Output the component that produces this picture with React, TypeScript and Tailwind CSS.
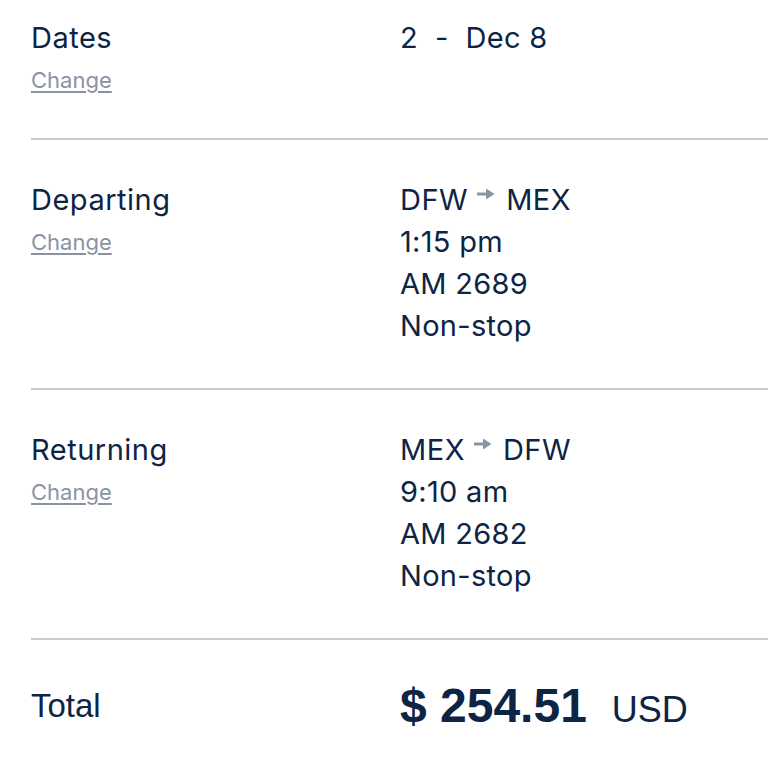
const sections = [
  {
    label: "Dates",
    lines: ["2  -  Dec 8"],
  },
  {
    label: "Departing",
    route: ["DFW", "MEX"],
    lines: ["1:15 pm", "AM 2689", "Non-stop"],
  },
  {
    label: "Returning",
    route: ["MEX", "DFW"],
    lines: ["9:10 am", "AM 2682", "Non-stop"],
  },
]

function Arrow() {
  return (
    <svg width="18" height="12" viewBox="0 0 18 12" className="ml-[9px] mr-[11px] mb-[13px] inline-block" fill="none">
      <path d="M0 6h11" stroke="#8a93a5" strokeWidth="3" />
      <path d="M9 0.5 17.5 6 9 11.5z" fill="#8a93a5" />
    </svg>
  )
}

export default function App() {
  return (
    <div className="min-h-screen bg-white pl-[31px] pr-[12px] text-[#0e2444]" style={{ fontFamily: "Inter, 'Noto Sans', sans-serif" }}>
      {sections.map((s, i) => (
        <div
          key={s.label}
          className={
            i === 0
              ? "flex border-b-2 border-[#c6cad1] pt-[17px] pb-[37px]"
              : "flex border-b-2 border-[#c6cad1] pt-[39px] pb-[41px]"
          }
        >
          <div className="w-[369px] shrink-0">
            <div className="text-[29px] leading-[42px] tracking-[0.5px]">{s.label}</div>
            <div className="text-[22px] leading-[42px] text-[#8a93a5] underline underline-offset-[3px] decoration-[1.5px]">Change</div>
          </div>
          <div className="text-[29px] leading-[42px] tracking-[0.5px]">
            {s.route && (
              <div className="flex items-center">
                {s.route[0]}
                <Arrow />
                {s.route[1]}
              </div>
            )}
            {s.lines.map((l) => (
              <div key={l} className="whitespace-pre tracking-[0.3px]">{l}</div>
            ))}
          </div>
        </div>
      ))}

      {/* Total */}
      <div className="flex items-center pt-[38px]" style={{ fontFamily: "'Liberation Sans', Arial, sans-serif" }}>
        <div className="w-[369px] shrink-0 text-[33px] leading-[46px]">Total</div>
        <div className="flex items-baseline">
          <span className="text-[48px] font-bold leading-[56px]">$ 254.51</span>
          <span className="ml-[25px] text-[36px] leading-[46px]">USD</span>
        </div>
      </div>
    </div>
  )
}
